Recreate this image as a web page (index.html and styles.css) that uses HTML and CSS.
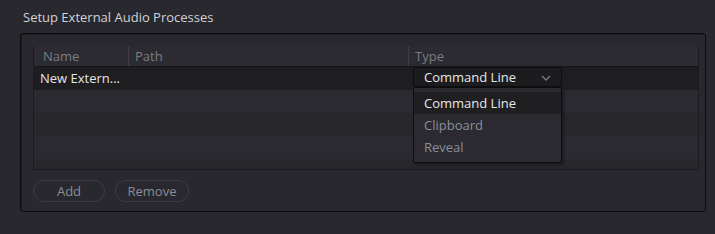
FILE: index.html
```html
<!DOCTYPE html>
<html lang="en">
<head>
    <meta charset="UTF-8">
    <title>Setup External Audio Processes</title>
    <link rel="stylesheet" href="styles.css">
</head>
<body>
    <div class="page">
        <div class="title">Setup External Audio Processes</div>
        <div class="panel">
            <div class="table">
                <div class="row head">
                    <div class="cell c-name">Name</div>
                    <div class="cell c-path">Path</div>
                    <div class="cell c-type">Type</div>
                </div>
                <div class="row sel">
                    <div class="cell c-name">New Extern...</div>
                    <div class="cell c-path"></div>
                    <div class="cell c-type">
                        <div class="combo">
                            <span>Command Line</span>
                            <svg width="10" height="6" viewBox="0 0 10 6"><path d="M1 1 L5 5 L9 1" fill="none" stroke="#7c7c82" stroke-width="1.3"/></svg>
                        </div>
                        <div class="menu">
                            <div class="item on">Command Line</div>
                            <div class="item">Clipboard</div>
                            <div class="item">Reveal</div>
                        </div>
                    </div>
                </div>
                <div class="row odd"></div>
                <div class="row even"></div>
                <div class="row odd"></div>
                <div class="row even short"></div>
            </div>
            <div class="buttons">
                <button class="btn add">Add</button>
                <button class="btn remove">Remove</button>
            </div>
        </div>
    </div>
</body>
</html>
```

FILE: styles.css
```css
body {
    margin: 0;
    background: #28282e;
    font-family: "Open Sans", "Noto Sans", sans-serif;
    font-size: 13px;
}
.page {
    padding: 8px 7px 0 20px;
}
.title {
    color: #d2d2d6;
    padding-left: 3px;
    height: 25px;
    line-height: 18px;
}
.panel {
    width: 686px;
    height: 179px;
    border: 1px solid #0c0c0e;
    border-radius: 3px;
    padding: 12px 0 0 12px;
    box-sizing: border-box;
    box-shadow: inset 1px 1px 0 #1c1c20;
}
.table {
    width: 664px;
    height: 123px;
    background: #2a2a30;
    border-right: 1px solid #1c1c20;
    border-bottom: 1px solid #1c1c20;
    border-left: 1px solid #1c1c20;
    border-radius: 2px 2px 0 0;
    overflow: visible;
}
.row {
    display: flex;
    height: 23px;
}
.row.head {
    height: 20px;
    background: #2b2b31;
    border-bottom: 1px solid #161618;
    color: #7c7c82;
    line-height: 20px;
}
.row.sel {
    background: #1e1e21;
    color: #e6e6ea;
    line-height: 23px;
}
.row.odd {
    background: #2a2a30;
}
.row.even {
    background: #27272c;
}
.row.short {
    height: 10px;
}
.cell {
    box-sizing: border-box;
}
.c-name {
    width: 94px;
    padding-left: 9px;
}
.c-path {
    width: 280px;
    padding-left: 6px;
}
.c-type {
    flex: 1;
    padding-left: 6px;
    position: relative;
}
.head .c-path,
.head .c-type {
    border-left: 1px solid #3e3e44;
}
.sel .c-name {
    padding-left: 6px;
}
.combo {
    position: absolute;
    left: 5px;
    top: 0;
    width: 149px;
    height: 20px;
    box-sizing: border-box;
    background: #1c1c1f;
    border: 1px solid #0e0e10;
    border-radius: 2px;
    display: flex;
    align-items: center;
    justify-content: space-between;
    padding: 0 10px 0 10px;
    line-height: 18px;
    color: #e6e6ea;
}
.combo svg {
    margin-top: 2px;
}
.menu {
    position: absolute;
    left: 5px;
    top: 20px;
    width: 149px;
    height: 76px;
    box-sizing: border-box;
    background: #2a2a30;
    border: 1px solid #0e0e10;
    border-radius: 2px;
    padding-top: 4px;
    box-shadow: 2px 2px 3px rgba(0, 0, 0, 0.35);
    z-index: 2;
}
.item {
    height: 22px;
    line-height: 22px;
    padding-left: 10px;
    color: #8a8e98;
}
.item.on {
    background: #1f1f22;
    color: #e6e6ea;
}
.buttons {
    display: flex;
    gap: 10px;
    margin-top: 10px;
}
.btn {
    height: 22px;
    border: 1px solid #3c3c42;
    border-radius: 11px;
    background: transparent;
    color: #8a8e98;
    font-family: "Open Sans", "Noto Sans", sans-serif;
    font-size: 13px;
    padding: 0;
}
.add {
    width: 72px;
}
.remove {
    width: 74px;
}
```
